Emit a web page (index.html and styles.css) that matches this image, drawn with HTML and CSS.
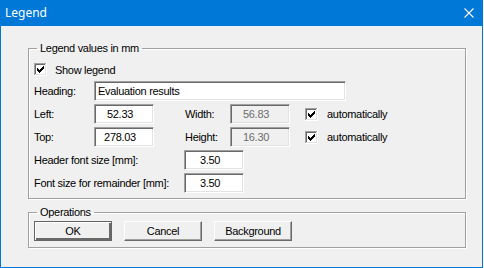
FILE: index.html
```html
<!DOCTYPE html>
<html>
<head>
<meta charset="utf-8">
<link rel="stylesheet" href="styles.css">
</head>
<body>
<div class="window">
  <div class="titlebar">
    <span class="title">Legend</span>
    <svg class="close" width="10" height="10" viewBox="0 0 10 10"><path d="M0.5 0.5L9.5 9.5M9.5 0.5L0.5 9.5" stroke="#fff" stroke-width="1.1" fill="none"/></svg>
  </div>
  <div class="client">
    <fieldset class="group g1">
      <legend>Legend values in mm</legend>
      <div class="row row-check">
        <span class="check"><svg width="13" height="13" viewBox="0 0 13 13" shape-rendering="crispEdges"><rect x="0" y="0" width="13" height="13" fill="#fff"/><rect x="0" y="0" width="12" height="1" fill="#a0a0a0"/><rect x="0" y="0" width="1" height="12" fill="#a0a0a0"/><rect x="1" y="1" width="10" height="1" fill="#696969"/><rect x="1" y="1" width="1" height="10" fill="#696969"/><rect x="1" y="11" width="11" height="1" fill="#e3e3e3"/><rect x="11" y="1" width="1" height="11" fill="#e3e3e3"/><path d="M3 5h1v3h-1zM4 6h1v3h-1zM5 7h1v3h-1zM6 6h1v3h-1zM7 5h1v3h-1zM8 4h1v3h-1zM9 3h1v3h-1z" fill="#000"/></svg></span>
        <span class="check-label">Show legend</span>
      </div>
      <div class="row">
        <span class="lbl lbl-a">Heading:</span>
        <input class="edit edit-wide" type="text" value="Evaluation results">
      </div>
      <div class="row">
        <span class="lbl lbl-a">Left:</span>
        <input class="edit num" type="text" value="52.33">
        <span class="lbl lbl-b">Width:</span>
        <input class="edit num disabled" type="text" value="56.83" disabled>
        <span class="check auto"><svg width="13" height="13" viewBox="0 0 13 13" shape-rendering="crispEdges"><rect x="0" y="0" width="13" height="13" fill="#fff"/><rect x="0" y="0" width="12" height="1" fill="#a0a0a0"/><rect x="0" y="0" width="1" height="12" fill="#a0a0a0"/><rect x="1" y="1" width="10" height="1" fill="#696969"/><rect x="1" y="1" width="1" height="10" fill="#696969"/><rect x="1" y="11" width="11" height="1" fill="#e3e3e3"/><rect x="11" y="1" width="1" height="11" fill="#e3e3e3"/><path d="M3 5h1v3h-1zM4 6h1v3h-1zM5 7h1v3h-1zM6 6h1v3h-1zM7 5h1v3h-1zM8 4h1v3h-1zM9 3h1v3h-1z" fill="#000"/></svg></span>
        <span class="check-label">automatically</span>
      </div>
      <div class="row">
        <span class="lbl lbl-a">Top:</span>
        <input class="edit num" type="text" value="278.03">
        <span class="lbl lbl-b">Height:</span>
        <input class="edit num disabled" type="text" value="16.30" disabled>
        <span class="check auto"><svg width="13" height="13" viewBox="0 0 13 13" shape-rendering="crispEdges"><rect x="0" y="0" width="13" height="13" fill="#fff"/><rect x="0" y="0" width="12" height="1" fill="#a0a0a0"/><rect x="0" y="0" width="1" height="12" fill="#a0a0a0"/><rect x="1" y="1" width="10" height="1" fill="#696969"/><rect x="1" y="1" width="1" height="10" fill="#696969"/><rect x="1" y="11" width="11" height="1" fill="#e3e3e3"/><rect x="11" y="1" width="1" height="11" fill="#e3e3e3"/><path d="M3 5h1v3h-1zM4 6h1v3h-1zM5 7h1v3h-1zM6 6h1v3h-1zM7 5h1v3h-1zM8 4h1v3h-1zM9 3h1v3h-1z" fill="#000"/></svg></span>
        <span class="check-label">automatically</span>
      </div>
      <div class="row">
        <span class="lbl lbl-c">Header font size [mm]:</span>
        <input class="edit num" type="text" value="3.50">
      </div>
      <div class="row">
        <span class="lbl lbl-c">Font size for remainder [mm]:</span>
        <input class="edit num" type="text" value="3.50">
      </div>
    </fieldset>
    <fieldset class="group g2">
      <legend>Operations</legend>
      <div class="buttons">
        <button class="btn default">OK</button>
        <button class="btn">Cancel</button>
        <button class="btn">Background</button>
      </div>
    </fieldset>
  </div>
</div>
</body>
</html>
```

FILE: styles.css
```css
html, body {
  margin: 0;
  padding: 0;
  background: #ffffff;
}
body {
  font-family: "Liberation Sans", Arial, sans-serif;
  font-size: 11px;
  letter-spacing: -0.3px;
  color: #000;
}
.window {
  width: 483px;
  height: 268px;
  box-sizing: border-box;
  border: 1px solid #0078d7;
  border-top: 0;
  background: #f0f0f0;
  display: flex;
  flex-direction: column;
}
.titlebar {
  height: 26px;
  flex: none;
  background: #0078d7;
  color: #fff;
  display: flex;
  align-items: center;
  justify-content: space-between;
  padding: 0 8px 0 4px;
  font-family: "Noto Sans", "Open Sans", sans-serif;
  font-size: 12px;
  letter-spacing: 0;
}
.title {
  line-height: 16px;
}
.close {
  display: block;
}
.client {
  padding: 16px 0 0 27px;
}
.group {
  margin: 0;
  width: 438px;
  box-sizing: border-box;
  min-inline-size: 0;
  border: 1px solid #a0a0a0;
  box-shadow: inset 1px 1px 0 #fff, 1px 1px 0 #fff;
  padding: 0 5px;
}
.group legend {
  padding: 0 3px;
  margin-left: 3px;
  line-height: 13px;
  height: 13px;
}
.g1 {
  height: 157px;
  padding-top: 8px;
}
.g2 {
  margin-top: 7px;
  height: 42px;
  padding-top: 2px;
}
.row {
  display: flex;
  align-items: center;
  height: 20px;
  margin-bottom: 3px;
}
.row-check {
  height: 13px;
  margin-bottom: 5px;
}
.check {
  width: 13px;
  height: 13px;
  flex: none;
}
.check svg {
  display: block;
}
.check-label {
  margin-left: 8px;
}
.auto {
  margin-left: 15px;
}
.auto + .check-label {
  margin-left: 9px;
}
.lbl {
  flex: none;
}
.lbl-a { width: 60px; }
.lbl-b { width: 45px; margin-left: 31px; }
.lbl-c { width: 150px; }
.edit {
  height: 20px;
  box-sizing: border-box;
  margin: 0;
  border-style: solid;
  border-width: 1px;
  border-color: #a0a0a0 #fff #fff #a0a0a0;
  box-shadow: inset 1px 1px 0 #696969, inset -1px -1px 0 #e3e3e3;
  background: #fff;
  font-family: "Liberation Sans", Arial, sans-serif;
  font-size: 11px;
  letter-spacing: -0.3px;
  color: #000;
  padding: 0 2px 0 3px;
  outline: none;
}
.edit-wide {
  width: 252px;
}
.num {
  width: 60px;
  text-align: center;
  padding: 0 8px 0 0;
}
.disabled {
  background: #f0f0f0;
  color: #6d6d6d;
  -webkit-text-fill-color: #6d6d6d;
  opacity: 1;
}
.buttons {
  display: flex;
  gap: 12px;
}
.btn {
  width: 78px;
  height: 20px;
  box-sizing: border-box;
  margin: 0;
  padding: 0;
  background: #f0f0f0;
  border-style: solid;
  border-width: 1px;
  border-color: #fff #696969 #696969 #fff;
  box-shadow: inset -1px -1px 0 #a0a0a0;
  font-family: "Liberation Sans", Arial, sans-serif;
  font-size: 11px;
  letter-spacing: -0.3px;
  color: #000;
}
.btn.default {
  border: 1px solid #646464;
  box-shadow: inset 1px 1px 0 #fff, inset -2px -2px 0 #696969;
}
```
